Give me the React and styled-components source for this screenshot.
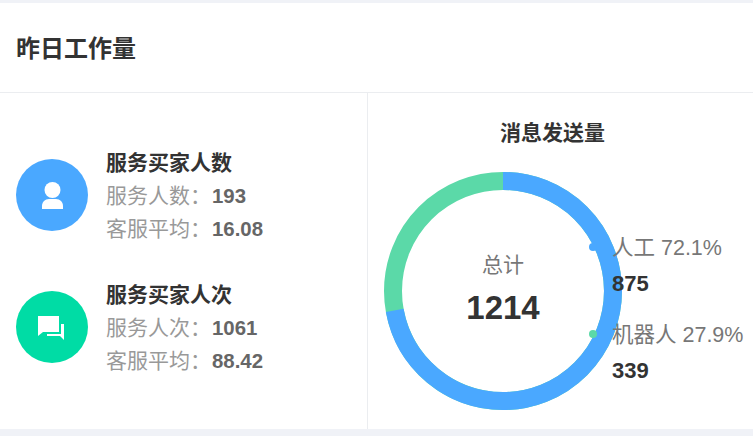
import React from 'react';
import styled, { createGlobalStyle } from 'styled-components';

const GlobalStyle = createGlobalStyle`
  html, body { margin: 0; padding: 0; background: #f0f2f7; }
  body { font-family: "Liberation Sans", "Noto Sans CJK SC", sans-serif; }
`;

const Page = styled.div`
  width: 753px;
  height: 436px;
  padding: 3px 0 7px;
  box-sizing: border-box;
  overflow: hidden;
`;

const Card = styled.div`
  height: 100%;
  background: #fff;
  display: flex;
  flex-direction: column;
`;

const Header = styled.div`
  height: 90px;
  flex: none;
  box-sizing: border-box;
  display: flex;
  align-items: center;
  padding: 0 0 3px 16px;
  border-bottom: 1px solid #ebedf0;
  font-size: 24px;
  font-weight: 700;
  color: #333;
`;

const Body = styled.div`
  flex: 1;
  display: flex;
  min-height: 0;
`;

const LeftPane = styled.div`
  width: 368px;
  flex: none;
  box-sizing: border-box;
  border-right: 1px solid #ebedf0;
  padding: 53px 0 0 16px;
  display: flex;
  flex-direction: column;
  gap: 33px;
`;

const RightPane = styled.div`
  flex: 1;
  display: flex;
  flex-direction: column;
`;

const Stat = styled.div`
  display: flex;
  align-items: flex-start;
  gap: 18px;
`;

const IconCircle = styled.div`
  width: 72px;
  height: 72px;
  margin-top: 13px;
  border-radius: 50%;
  flex: none;
  display: flex;
  align-items: center;
  justify-content: center;
  background: ${(p) => p.$color};
`;

const StatText = styled.div`
  display: flex;
  flex-direction: column;
`;

const StatTitle = styled.div`
  height: 33px;
  font-size: 21px;
  line-height: 33px;
  font-weight: 700;
  color: #333;
`;

const StatLine = styled.div`
  height: 33px;
  font-size: 21px;
  line-height: 33px;
  color: #999;
`;

const StatValue = styled.b`
  margin-left: 1px;
  font-size: 20.4px;
  font-weight: 700;
  color: #666;
`;

const ChartTitle = styled.div`
  font-size: 21px;
  line-height: 30px;
  font-weight: 700;
  color: #333;
  text-align: center;
  margin-top: 25px;
  padding-right: 16px;
`;

const ChartArea = styled.div`
  position: relative;
  flex: 1;
`;

const Ring = styled.svg`
  display: block;
  margin: 24px 0 0 16px;
`;

const Center = styled.div`
  position: absolute;
  left: 16px;
  top: 24px;
  width: 238px;
  height: 238px;
  display: flex;
  flex-direction: column;
  align-items: center;
  justify-content: center;
  padding-top: 6px;
  box-sizing: border-box;
`;

const CenterLabel = styled.div`
  font-size: 21px;
  line-height: 28px;
  color: #777;
`;

const CenterValue = styled.div`
  font-size: 33px;
  line-height: 58px;
  font-weight: 700;
  color: #333;
`;

const Legend = styled.div`
  position: absolute;
  left: 244px;
  top: ${(p) => p.$top}px;
  white-space: nowrap;
`;

const LegendLabel = styled.div`
  font-size: 21.5px;
  line-height: 28px;
  color: #777;
`;

const LegendValue = styled.div`
  font-size: 22px;
  line-height: 28px;
  margin-top: 8px;
  font-weight: 700;
  color: #333;
`;

const Dot = styled.span`
  position: absolute;
  left: -23px;
  top: 9px;
  width: 8px;
  height: 8px;
  border-radius: 50%;
  background: ${(p) => p.$color};
`;

const ChatSvg = styled.svg`
  margin: 2px 2px 0 0;
`;

const PersonIcon = () => (
  <svg width="21" height="27" viewBox="0 0 21 27">
    <circle cx="10.5" cy="8" r="8" fill="#fff" />
    <path d="M0 27v-3c0-4 3-7 7-7h7c4 0 7 3 7 7v3z" fill="#fff" />
  </svg>
);

const ChatIcon = () => (
  <ChatSvg width="26" height="24" viewBox="0 0 26 24">
    <path d="M0 0h21v16H5L0 20z" fill="#fff" />
    <path d="M23 8h3v16l-4-4H9v-2h14z" fill="#fff" />
  </ChatSvg>
);

const BLUE = '#4aa8ff';
const GREEN = '#5bd9a8';
const R = 110;
const C = 2 * Math.PI * R;

const stats = [
  { title: '服务买家人数', color: '#4aa8ff', icon: <PersonIcon />, a: '服务人数', av: '193', b: '客服平均', bv: '16.08' },
  { title: '服务买家人次', color: '#00dca5', icon: <ChatIcon />, a: '服务人次', av: '1061', b: '客服平均', bv: '88.42' },
];

export default function App() {
  return (
    <Page>
      <GlobalStyle />
      <Card>
        <Header>昨日工作量</Header>
        <Body>
          <LeftPane>
            {stats.map((s) => (
              <Stat key={s.title}>
                <IconCircle $color={s.color}>{s.icon}</IconCircle>
                <StatText>
                  <StatTitle>{s.title}</StatTitle>
                  <StatLine>{s.a}：<StatValue>{s.av}</StatValue></StatLine>
                  <StatLine>{s.b}：<StatValue>{s.bv}</StatValue></StatLine>
                </StatText>
              </Stat>
            ))}
          </LeftPane>
          <RightPane>
            <ChartTitle>消息发送量</ChartTitle>
            <ChartArea>
              <Ring width="238" height="238" viewBox="0 0 238 238">
                <circle cx="119" cy="119" r={R} fill="none" stroke={GREEN} strokeWidth="18" />
                <circle
                  cx="119"
                  cy="119"
                  r={R}
                  fill="none"
                  stroke={BLUE}
                  strokeWidth="18"
                  strokeDasharray={`${C * 0.721} ${C}`}
                  transform="rotate(-90 119 119)"
                />
              </Ring>
              <Center>
                <CenterLabel>总计</CenterLabel>
                <CenterValue>1214</CenterValue>
              </Center>
              <Legend $top={86}>
                <Dot $color={BLUE} />
                <LegendLabel>人工 72.1%</LegendLabel>
                <LegendValue>875</LegendValue>
              </Legend>
              <Legend $top={173}>
                <Dot $color={GREEN} />
                <LegendLabel>机器人 27.9%</LegendLabel>
                <LegendValue>339</LegendValue>
              </Legend>
            </ChartArea>
          </RightPane>
        </Body>
      </Card>
    </Page>
  );
}
